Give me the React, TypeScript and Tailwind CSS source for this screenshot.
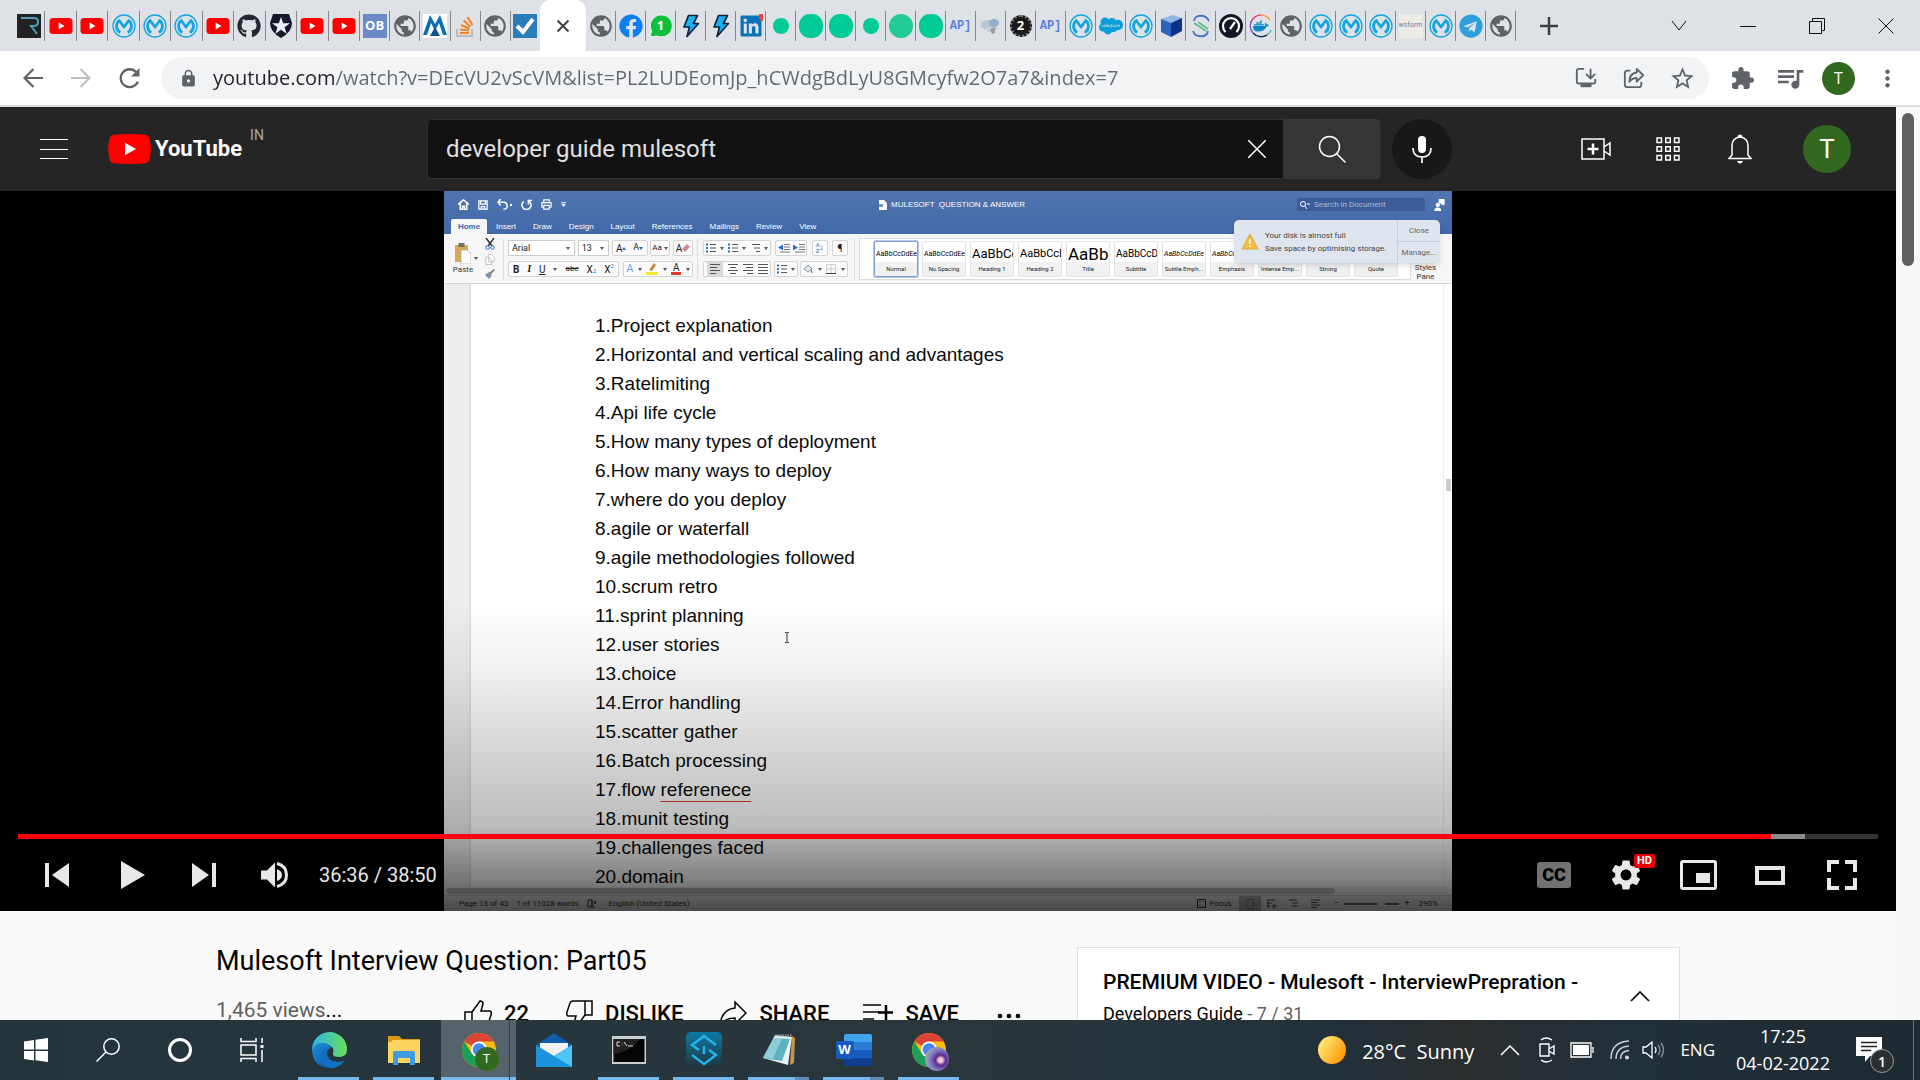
import React from "react";
import type { ReactNode } from "react";
import { MdPublic, MdExtension, MdLock, MdStarBorder, MdQueueMusic, MdMoreVert, MdSettings } from "react-icons/md";
import { FaGithub, FaFacebook, FaLinkedin, FaSalesforce, FaTelegram, FaDocker } from "react-icons/fa";

/* ---------- Favicons ---------- */

const YtFav = () => (
  <svg viewBox="0 0 24 24" className="size-6">
    <rect x="0.5" y="4" width="23" height="16" rx="3.5" fill="#f00" />
    <path d="M9.7 8.6v6.8l5.8-3.4z" fill="#fff" />
  </svg>
);
const MuleFav = () => (
  <svg viewBox="0 0 24 24" className="size-6" fill="none" stroke="#12a5e0">
    <circle cx="12" cy="12" r="11" strokeWidth="1.3" />
    <path d="M8.200 18.600A7.500 7.500 0 0 1 7.200 6.500l4.800 6.500 4.800-6.500a7.500 7.500 0 0 1-1 12.100" strokeWidth="2.800" strokeLinejoin="round" />
  </svg>
);
const GlobeFav = () => <MdPublic className="size-[26px] shrink-0 text-[#5f6368]" />;
const RFav = () => (
  <svg viewBox="0 0 24 24" className="size-6">
    <rect width="24" height="24" fill="#222" />
    <path d="M4 4h13q4 0 4 4t-4 4h-3l6 8" fill="none" stroke="#4f9db8" strokeWidth="2" />
  </svg>
);
const ShieldFav = () => (
  <svg viewBox="0 0 24 24" className="size-6">
    <path d="M4 0h16l3 9q0 9-11 15Q1 18 1 9z" fill="#16192a" />
    <path d="m12 3 2.200 6.300H21l-5.400 4 2 6.500-5.600-4-5.600 4 2-6.500-5.400-4h6.800z" fill="#eef" />
  </svg>
);
const ObFav = () => <span className="flex size-6 shrink-0 items-center justify-center bg-[#6a8ac8] font-['Open_Sans',sans-serif] text-[13px] font-bold text-white">OB</span>;
const PeaksFav = () => (
  <svg viewBox="0 0 24 24" className="size-6">
    <rect width="24" height="24" fill="#fff" />
    <path d="M0 21 7 1l5 9 5-9 7 20h-4L16 9l-4 8-4-8-4 12z" fill="#0b6fb8" />
    <path d="m12 13 5 9H7z" fill="#0a4f93" />
  </svg>
);
const StackFav = () => (
  <svg viewBox="0 0 24 24" className="size-6" fill="none" strokeWidth="2">
    <path d="M4 15v7h15v-7" stroke="#bcbbbb" />
    <path d="M7 19h9M7 15.500l9 1M8 11l8.500 3.500M10.500 6.500l7 6M14.500 3l5 8" stroke="#f48024" />
  </svg>
);
const CheckFav = () => (
  <svg viewBox="0 0 24 24" className="size-6">
    <rect width="24" height="24" fill="#2a7db8" />
    <path d="m4 12 6 6L20 5" fill="none" stroke="#fff" strokeWidth="4" />
  </svg>
);
const WaFav = () => (
  <span className="relative flex size-6 items-center justify-center">
    <svg viewBox="0 0 24 24" className="absolute inset-0 size-6">
      <path d="M1 23 2.600 17A11 11 0 1 1 8 22z" fill="#0fbf3c" stroke="#e9f7ec" />
    </svg>
    <b className="relative font-['Open_Sans',sans-serif] text-[13px] leading-none text-white">1</b>
  </span>
);
const BoltFav = () => (
  <svg viewBox="0 0 24 24" className="size-6">
    <path d="M9.500 1.500h9l-4 8h5L8 22.500l2.500-9.500H5z" fill="#1cb0f6" stroke="#10243f" strokeWidth="1.700" strokeLinejoin="round" />
  </svg>
);
const LinkedFav = () => (
  <span className="relative size-6">
    <FaLinkedin className="size-6 text-[#0a73b5]" />
    <i className="absolute right-0 top-0 h-[7px] w-1 rounded-bl-full bg-[#e8453c]" />
  </span>
);
const ApiFav = () => <span className="font-['Liberation_Mono',monospace] text-[12px] font-bold text-[#5b7fe0]">AP]</span>;
const CloudFav = () => (
  <svg viewBox="0 0 24 24" className="size-6">
    <ellipse cx="10" cy="11" rx="8" ry="5" fill="#b9c4d0" />
    <ellipse cx="15" cy="9" rx="5" ry="4" fill="#8fb1cf" />
    <path d="M6 13h13l-3 5H9z" fill="#cdd2d8" />
    <path d="m11 15 5-2v6l-3 1z" fill="#9a9da2" />
  </svg>
);
const TwoFav = () => <span className="flex size-[22px] items-center justify-center rounded-full border-2 border-dotted border-[#777] bg-[#191919] font-['Open_Sans',sans-serif] text-[13px] font-bold text-white">2</span>;
const CubeFav = () => (
  <svg viewBox="0 0 24 24" className="size-6">
    <path d="m2 5 12-4 9 3-11 5z" fill="#8fb5e6" />
    <path d="M2 5l10 4v14L2 18z" fill="#2d62bd" />
    <path d="m12 9 11-5v13l-11 6z" fill="#0d3187" />
  </svg>
);
const SFav = () => (
  <svg viewBox="0 0 24 24" className="size-6" fill="none" strokeWidth="1.800">
    <path d="M20 7C17 0 6 0 5 7M4 17c2 7 14 7 15 0" stroke="#4a76c9" />
    <path d="m5 9 12 8M9 8l10 7" stroke="#5bbf8d" />
  </svg>
);
const GaugeFav = () => (
  <svg viewBox="0 0 24 24" className="size-6" fill="none">
    <circle cx="12" cy="12" r="12" fill="#141526" />
    <path d="M6.500 18A8 8 0 1 1 17.500 18" stroke="#fff" strokeWidth="2.200" />
    <path d="m11 15 5-7" stroke="#fff" strokeWidth="2.200" />
  </svg>
);
const DockerFav = () => (
  <span className="relative flex size-6 items-center justify-center">
    <svg viewBox="0 0 24 24" className="absolute inset-0 size-6" fill="none" strokeWidth="1.500">
      <path d="M12 1A11 11 0 0 1 21 6" stroke="#f9a13a" />
      <path d="M12 1A11 11 0 0 0 3 6" stroke="#ec3f6c" />
      <path d="M3 6a11 11 0 0 0 1 13" stroke="#7a4fc7" />
      <path d="M4 19a11 11 0 0 0 14 2" stroke="#1a3657" />
      <path d="M18 21a11 11 0 0 0 4-5" stroke="#3ec9c0" />
    </svg>
    <FaDocker className="size-4 text-[#0a87c9]" />
  </span>
);
const WsFav = () => <span className="flex size-6 items-center justify-center bg-[#edebe6] font-['Roboto',sans-serif] text-[7px] text-[#5b86b5]">wsform</span>;
const DotFav = () => <i className="size-4 rounded-full bg-[#00cb96]" />;
const BigFav = () => <i className="size-6 rounded-[11px] bg-[#00cb96]" />;
const BigLightFav = () => <i className="size-6 rounded-full bg-[#22cb98]" />;

const leftTabs: [string, ReactNode][] = [
  ["R", <RFav />], ["YouTube", <YtFav />], ["YouTube", <YtFav />], ["MuleSoft", <MuleFav />], ["MuleSoft", <MuleFav />], ["MuleSoft", <MuleFav />],
  ["YouTube", <YtFav />], ["GitHub", <FaGithub className="size-6 text-[#24292f]" />], ["Auth0", <ShieldFav />], ["YouTube", <YtFav />], ["YouTube", <YtFav />],
];
const midTabs: [string, ReactNode][] = [
  ["OB", <ObFav />], ["Page", <GlobeFav />], ["Peaks", <PeaksFav />], ["Stack Overflow", <StackFav />], ["Page", <GlobeFav />], ["Tasks", <CheckFav />],
];
const rightTabs: [string, ReactNode][] = [
  ["Page", <GlobeFav />], ["Facebook", <FaFacebook className="size-6 text-[#0d7ff2]" />], ["WhatsApp", <WaFav />], ["Bolt", <BoltFav />], ["Bolt", <BoltFav />],
  ["LinkedIn", <LinkedFav />], ["Course", <DotFav />], ["Course", <BigFav />], ["Course", <BigFav />], ["Course", <DotFav />], ["Course", <BigLightFav />], ["Course", <BigFav />],
  ["API", <ApiFav />], ["Cloud", <CloudFav />], ["Two", <TwoFav />], ["API", <ApiFav />], ["MuleSoft", <MuleFav />],
  ["Salesforce", <FaSalesforce className="size-6 text-[#0a9ddb]" />], ["MuleSoft", <MuleFav />], ["Cube", <CubeFav />], ["S", <SFav />], ["Gauge", <GaugeFav />],
  ["Docker", <DockerFav />], ["Page", <GlobeFav />], ["MuleSoft", <MuleFav />], ["MuleSoft", <MuleFav />], ["MuleSoft", <MuleFav />], ["Form", <WsFav />],
  ["MuleSoft", <MuleFav />], ["Telegram", <FaTelegram className="size-6 text-[#2d9fdc]" />], ["Page", <GlobeFav />],
];

function Tab({ label, last, children }: { label: string; last?: boolean; children: ReactNode }) {
  return (
    <button aria-label={label} className={`flex h-[30px] min-w-0 flex-1 items-center justify-center ${last ? "" : "border-r border-[#85888c]"}`}>
      {children}
    </button>
  );
}

const toolBtn = "flex size-8 shrink-0 items-center justify-center text-[#5f6368]";

function BrowserChrome() {
  return (
    <header className="shrink-0 font-['Open_Sans',sans-serif]">
      <div className="flex h-[51px] items-center bg-[#dee1e6] pl-[14px]">
        <div className="flex w-[346px] shrink-0">{leftTabs.map(([l, n], i) => <Tab key={i} label={l}>{n}</Tab>)}</div>
        <div className="flex w-[180px] shrink-0">{midTabs.map(([l, n], i) => <Tab key={i} label={l} last={i === 5}>{n}</Tab>)}</div>
        <div className="flex h-full w-[46px] shrink-0 items-center justify-center rounded-t-[10px] bg-white">
          <button aria-label="Close tab">
            <svg viewBox="0 0 14 14" className="size-[14px]" stroke="#3c4043" strokeWidth="2"><path d="m1.500 1.500 11 11m0-11-11 11" /></svg>
          </button>
        </div>
        <div className="flex w-[930px] shrink-0">{rightTabs.map(([l, n], i) => <Tab key={i} label={l}>{n}</Tab>)}</div>
        <button aria-label="New tab" className="flex w-[66px] justify-center">
          <svg viewBox="0 0 18 18" className="size-[18px]" stroke="#3c4043" strokeWidth="2.500"><path d="M9 0v18M0 9h18" /></svg>
        </button>
        <div className="ml-auto flex h-11 items-center">
          <button aria-label="Search tabs" className="flex w-[69px] justify-center"><svg viewBox="0 0 16 16" className="size-4" fill="none" stroke="#111"><path d="m1 3 7 9 7-9" /></svg></button>
          <button aria-label="Minimize" className="flex w-[69px] justify-center"><svg viewBox="0 0 16 16" className="size-4" stroke="#111"><path d="M0 8.500h16" /></svg></button>
          <button aria-label="Restore" className="flex w-[69px] justify-center"><svg viewBox="0 0 16 16" className="size-4" fill="none" stroke="#111"><path d="M.5 3.500h12v12H.5zM3.500 3.500v-3h12v12h-3" /></svg></button>
          <button aria-label="Close" className="flex w-[69px] justify-center"><svg viewBox="0 0 16 16" className="size-4" stroke="#111"><path d="m.5.5 15 15m0-15-15 15" /></svg></button>
        </div>
      </div>
      <div className="flex h-14 items-center border-b-2 border-[#dcdcdc] bg-white px-[17px]">
        <button aria-label="Back" className={toolBtn}><svg viewBox="0 0 20 20" className="size-5" fill="none" stroke="#5f6368" strokeWidth="2.200"><path d="M20 10H2M10.500 1 1.500 10l9 9" /></svg></button>
        <button aria-label="Forward" className={`${toolBtn} ml-4`}><svg viewBox="0 0 20 20" className="size-5" fill="none" stroke="#bdc1c6" strokeWidth="2.200"><path d="M0 10h18M9.500 1l9 9-9 9" /></svg></button>
        <button aria-label="Reload" className={`${toolBtn} mx-4`}><svg viewBox="0 0 20 20" className="size-[21px]" fill="none"><path d="M18 13a8.500 8.500 0 1 1-1.500-9" stroke="#5f6368" strokeWidth="2.200" /><path d="M19.500 0v8h-8z" fill="#5f6368" /></svg></button>
        <div className="flex h-[42px] min-w-0 flex-1 items-center rounded-full bg-[#f1f3f4] pl-[18px] pr-[11px]">
          <MdLock className="size-[19px] shrink-0 text-[#5f6368]" />
          <input
            aria-label="Address"
            defaultValue="youtube.com/watch?v=DEcVU2vScVM&list=PL2LUDEomJp_hCWdgBdLyU8GMcyfw2O7a7&index=7"
            className="ml-[15px] min-w-0 flex-1 bg-[linear-gradient(90deg,#202124_121px,#64676b_121px)] bg-clip-text text-[20px] text-transparent outline-none"
          />
          <button aria-label="Install" className={`${toolBtn} mr-4`}><svg viewBox="0 0 24 24" className="size-[22px]" fill="none" stroke="#5f6368" strokeWidth="2"><path d="M10 2H4q-2 0-2 2v12q0 2 2 2h16q2 0 2-2v-3M17 2v10m-5-4.500 5 5 5-5" /><path d="M6 18h12v4H6z" fill="#5f6368" stroke="none" /></svg></button>
          <button aria-label="Share page" className={`${toolBtn} mr-4`}><svg viewBox="0 0 24 24" className="size-[22px]" fill="none" stroke="#5f6368" strokeWidth="2" strokeLinejoin="round"><path d="M8 4H5Q2 4 2 7v12q0 3 3 3h12q3 0 3-3v-3" /><path d="M15 2l7 7-7 7v-4q-5 0-8 4 0-9 8-10z" /></svg></button>
          <button aria-label="Bookmark" className={toolBtn}><MdStarBorder className="size-[27px]" /></button>
        </div>
        <button aria-label="Extensions" className={`${toolBtn} ml-[17px]`}><MdExtension className="size-[25px]" /></button>
        <button aria-label="Media" className={`${toolBtn} ml-4`}><MdQueueMusic className="size-8" /></button>
        <button aria-label="Profile" className="ml-4 flex size-[33px] shrink-0 items-center justify-center rounded-full bg-[#33691e] text-[16px] text-white">T</button>
        <button aria-label="Menu" className={`${toolBtn} ml-4`}><MdMoreVert className="size-[27px]" /></button>
      </div>
    </header>
  );
}

/* ---------- YouTube masthead ---------- */

function Masthead() {
  return (
    <div className="flex h-[84px] items-center bg-[#252525] pl-10 pr-[45px] font-['Roboto',sans-serif] text-white">
      <button aria-label="Guide" className="flex h-5 w-7 flex-col justify-between"><i className="h-px w-full bg-white" /><i className="h-px w-full bg-white" /><i className="h-px w-full bg-white" /></button>
      <a href="#home" aria-label="YouTube home" className="ml-10 flex items-center">
        <svg viewBox="0 0 43 30" className="h-[30px] w-[43px]"><path d="M6 .8Q21.500-.8 37 .8q4 .5 4.800 4.700 2 9.500 0 19-.8 4.200-4.800 4.700-15.500 1.600-31 0-4-.5-4.800-4.700-2-9.500 0-19Q2 1.300 6 .8z" fill="#f00" /><path d="M17 8.700v12.600L28 15z" fill="#fff" /></svg>
        <span className="ml-1 text-[22px] font-bold leading-[30px]">YouTube</span>
        <span className="mb-7 ml-2 text-[14px] leading-none text-[#aaa]">IN</span>
      </a>
      <form className="ml-auto flex h-[60px] w-[953px] shrink-0" onSubmit={(e) => e.preventDefault()}>
        <div className="flex min-w-0 flex-1 items-center rounded-l-sm border border-[#303030] bg-[#121212] pl-[18px] pr-[17px]">
          <input aria-label="Search" defaultValue="developer guide mulesoft" className="min-w-0 flex-1 bg-transparent text-[24px] text-[#e0e0e0] outline-none" />
          <button type="button" aria-label="Clear"><svg viewBox="0 0 18 18" className="size-[18px]" stroke="#fff" strokeWidth="1.500"><path d="m0 0 18 18m0-18L0 18" /></svg></button>
        </div>
        <button aria-label="Search" className="flex w-24 items-center justify-center rounded-r-sm border border-[#3a3a3a] bg-[#353535]">
          <svg viewBox="0 0 28 28" className="size-7" fill="none" stroke="#fff" strokeWidth="1.500"><circle cx="11.500" cy="11.500" r="10" /><path d="m18.500 18.500 9 9" /></svg>
        </button>
      </form>
      <button aria-label="Search with voice" className="ml-3 flex size-[60px] shrink-0 items-center justify-center rounded-full bg-[#181818]">
        <svg viewBox="0 0 20 28" className="h-7 w-5" fill="none" stroke="#fff" strokeWidth="1.700"><rect x="6" y="1" width="8" height="17" rx="4" fill="#fff" stroke="none" /><path d="M1 13q0 9 9 9t9-9M10 22v6" /></svg>
      </button>
      <button aria-label="Create" className="ml-[129px]"><svg viewBox="0 0 30 22" className="h-[22px] w-[30px]" fill="none" stroke="#fff" strokeWidth="1.500"><path d="M1 1h22v20H1zM23 9l6-4v12l-6-4" /><path d="M12 5.500v11M6.500 11h11" strokeWidth="2.500" /></svg></button>
      <button aria-label="Apps" className="ml-[45px]"><svg viewBox="0 0 24 24" className="size-6" fill="none" stroke="#fff" strokeWidth="1.500">{[1, 9.750, 18.500].map((y) => [1, 9.750, 18.500].map((x) => <rect key={`${x}-${y}`} x={x} y={y} width="4.500" height="4.500" />))}</svg></button>
      <button aria-label="Notifications" className="ml-12"><svg viewBox="0 0 24 30" className="h-[30px] w-6" fill="none" stroke="#fff" strokeWidth="1.500"><path d="M1 24.500 4 21v-9q0-8 8-9 8 1 8 9v9l3 3.500z" /><path d="M9.500 3q0-2.500 2.500-2.500T14.500 3zM9 27h6q-1 2.500-3 2.500T9 27z" fill="#fff" stroke="none" /></svg></button>
      <button aria-label="Account" className="ml-[51px] flex size-12 shrink-0 items-center justify-center rounded-full bg-[#33691e] text-[26px]">T</button>
    </div>
  );
}

/* ---------- Word document shown in the video ---------- */

const group = "flex h-4 items-center justify-around rounded-[2px] border border-[#d4d4d4] bg-[#fbfbfb] text-[10px] text-[#222]";
const Caret = () => <svg viewBox="0 0 4 3" className="h-[3px] w-1 shrink-0" fill="#555"><path d="M0 0h4L2 3z" /></svg>;
const Lines = ({ d, bullet }: { d: string; bullet?: boolean }) => (
  <svg viewBox="0 0 10 10" className="size-[10px]" fill="none" stroke="#555"><path d={d} />{bullet && <path d="M0 1.500h2M0 5h2M0 8.500h2" stroke="#2b6fc9" strokeWidth="2" />}</svg>
);
const Indent = ({ out }: { out?: boolean }) => (
  <svg viewBox="0 0 12 10" className="h-[10px] w-3" fill="none" stroke="#777"><path d="M6 1.500h6M6 4h6M6 6.500h6M2 9h10" /><path d={out ? "M5 1.500v6L0 4.500z" : "M0 1.500v6l5-3z"} fill="#2b6fc9" stroke="none" /></svg>
);
const LIST = "M4 1.500h6M4 5h6M4 8.500h6";

function B({ label, children, className = "" }: { label: string; children: ReactNode; className?: string }) {
  return <button aria-label={label} className={`flex h-full items-center justify-center ${className}`}>{children}</button>;
}

const wordTabs = ["Home", "Insert", "Draw", "Design", "Layout", "References", "Mailings", "Review", "View"];
const wordStyles: [string, string, string][] = [
  ["Normal", "AaBbCcDdEe", "text-[7px]"],
  ["No Spacing", "AaBbCcDdEe", "text-[7px]"],
  ["Heading 1", "AaBbCc", "text-[13px]"],
  ["Heading 2", "AaBbCcD", "text-[11px]"],
  ["Title", "AaBbC", "text-[17px]"],
  ["Subtitle", "AaBbCcD", "text-[10px] text-[#777]"],
  ["Subtle Emph...", "AaBbCcDdEe", "text-[7px] italic text-[#666]"],
  ["Emphasis", "AaBbCcDdEe", "text-[7px] italic"],
  ["Intense Emp...", "AaBbCcDdEe", "text-[7px] italic text-[#4472c4]"],
  ["Strong", "AaBbCcDdEe", "text-[7px] font-bold"],
  ["Quote", "AaBbCcDdEe", "text-[7px] italic"],
];
const docLines = [
  "1.Project explanation", "2.Horizontal and vertical scaling and advantages", "3.Ratelimiting", "4.Api life cycle", "5.How many types of deployment",
  "6.How many ways to deploy", "7.where do you deploy", "8.agile or waterfall", "9.agile methodologies followed", "10.scrum retro", "11.sprint planning",
  "12.user stories", "13.choice", "14.Error handling", "15.scatter gather", "16.Batch processing", "17.flow ", "18.munit testing", "19.challenges faced", "20.domain",
];

function WordRibbon() {
  return (
    <div className="flex h-[50px] items-center border-b border-[#d5d5d5] bg-[#f6f6f6] pl-2 font-['Roboto',sans-serif]">
      <div className="flex w-[22px] flex-col items-center">
        <svg viewBox="0 0 16 22" className="h-[22px] w-4"><path d="M0 3h13v17H0z" fill="#dba753" /><path d="M3.500 1h6v4h-6z" fill="#6d6d6d" /><path d="M6 8h6l4 4v10H6z" fill="#fff" stroke="#aaa" strokeWidth=".7" /></svg>
        <span className="text-[8px] leading-3 text-[#333]">Paste</span>
      </div>
      <Caret />
      <div className="ml-[6px] flex w-3 flex-col items-center gap-1">
        <svg viewBox="0 0 10 12" className="h-3 w-[10px]" fill="none"><path d="m1 0 6 8M9 0 3 8" stroke="#333" strokeWidth="1.500" /><circle cx="2.500" cy="9.500" r="1.800" stroke="#2b6fc9" /><circle cx="7.500" cy="9.500" r="1.800" stroke="#2b6fc9" /></svg>
        <svg viewBox="0 0 10 12" className="h-[11px] w-[10px]" fill="#fff" stroke="#bbb"><path d="M3.500.5h3l3 3v5h-6zM.5 3.500h3l3 3v5h-6z" /></svg>
        <svg viewBox="0 0 10 10" className="size-[10px]"><path d="m9 0 1 1-4 4-2-1z" fill="#777" /><path d="m4 3 3 3-3 4-4-4z" fill="#7d93ad" /></svg>
      </div>
      <i className="ml-[7px] h-10 w-px bg-[#ddd]" />
      <div className="ml-1 flex w-[185px] flex-col gap-[5px]">
        <div className="flex justify-between">
          <label className="flex h-4 w-[67px] items-center border border-[#ccc] bg-white pr-1"><select aria-label="Font" className="w-full appearance-none pl-[3px] text-[9px] leading-none text-[#222]"><option>Arial</option></select><Caret /></label>
          <label className="flex h-4 w-[31px] items-center border border-[#ccc] bg-white pr-1"><select aria-label="Font size" className="w-full appearance-none pl-[3px] text-[9px] leading-none text-[#222]"><option>13</option></select><Caret /></label>
          <div className={`${group} w-9`}><B label="Grow font">A<svg viewBox="0 0 4 3" className="h-[3px] w-1" fill="#2b6fc9"><path d="M0 3h4L2 0z" /></svg></B><B label="Shrink font" className="text-[9px]">A<svg viewBox="0 0 4 3" className="h-[3px] w-1" fill="#2b6fc9"><path d="M0 0h4L2 3z" /></svg></B></div>
          <div className={`${group} w-5`}><B label="Change case" className="text-[8px]">Aa</B><Caret /></div>
          <div className={`${group} w-5`}><B label="Clear formatting">A<svg viewBox="0 0 8 8" className="size-2"><path d="m5 0 3 3-5 5-3-3z" fill="#d88a96" /></svg></B></div>
        </div>
        <div className="flex gap-1">
          <div className={`${group} w-[111px]`}>
            <B label="Bold" className="font-bold">B</B><B label="Italic" className="font-serif font-bold italic">I</B><B label="Underline" className="underline">U</B><Caret /><B label="Strikethrough" className="text-[8px] line-through">abc</B><B label="Subscript">X<sub className="text-[6px] text-[#2b6fc9]">2</sub></B><B label="Superscript">X<sup className="text-[6px] text-[#2b6fc9]">2</sup></B>
          </div>
          <div className={`${group} w-[70px]`}>
            <B label="Text effects" className="text-[11px] text-[#6aa5e8]">A</B><Caret />
            <B label="Highlight"><svg viewBox="0 0 12 12" className="size-3"><path d="m8 0 2 2-4 6-3-1z" fill="#c08c3a" /><path d="M0 9h12v3H0z" fill="#f7e733" /></svg></B><Caret />
            <B label="Font color"><span className="border-b-[3px] border-[#e23b2e] px-[2px] leading-[9px]">A</span></B><Caret />
          </div>
        </div>
      </div>
      <i className="ml-1 h-10 w-px bg-[#ddd]" />
      <div className="ml-[5px] flex w-[145px] flex-col gap-[5px]">
        <div className="flex justify-between">
          <div className={`${group} w-[68px]`}><B label="Bullets"><Lines d={LIST} bullet /></B><Caret /><B label="Numbering"><Lines d={LIST} bullet /></B><Caret /><B label="Multilevel"><Lines d="M2 1.500h8M4 5h6M6 8.500h4" /></B><Caret /></div>
          <div className={`${group} w-8`}><B label="Decrease indent"><Indent out /></B><B label="Increase indent"><Indent /></B></div>
          <div className={`${group} w-4`}><B label="Sort" className="text-[8px]"><span className="text-[6px] leading-[6px] text-[#2b6fc9]">A<br />Z</span>↓</B></div>
          <div className={`${group} w-4`}><B label="Show marks">¶</B></div>
        </div>
        <div className="flex justify-between">
          <div className={`${group} w-[68px]`}><B label="Align left" className="w-4 bg-[#d8d8d8]"><Lines d="M0 .5h10M0 3.500h7M0 6.500h10M0 9.500h6" /></B><B label="Center"><Lines d="M0 .5h10M2 3.500h6M0 6.500h10M2 9.500h6" /></B><B label="Align right"><Lines d="M0 .5h10M3 3.500h7M0 6.500h10M4 9.500h6" /></B><B label="Justify"><Lines d="M0 .5h10M0 3.500h10M0 6.500h10M0 9.500h10" /></B></div>
          <div className={`${group} w-6`}><B label="Line spacing"><Lines d={LIST} bullet /></B><Caret /></div>
          <div className={`${group} w-12`}><B label="Shading"><svg viewBox="0 0 10 10" className="size-[10px]"><path d="m1 5 4-4 4 4-4 3z" fill="#dfe7ef" stroke="#667" strokeWidth=".7" /><path d="M8 5q2 3 1 4T8 5z" fill="#2b6fc9" /></svg></B><Caret /><B label="Borders"><svg viewBox="0 0 10 10" className="size-[10px]" fill="none" stroke="#ccc"><path d="M.5.5h9v9h-9zM5 0v10M0 5h10" /><path d="M0 9.500h10" stroke="#444" /></svg></B><Caret /></div>
        </div>
      </div>
      <i className="ml-[6px] h-10 w-px bg-[#ddd]" />
      <div className="ml-1 flex h-[42px] min-w-0 flex-1 items-center border border-[#ddd] bg-white pl-[14px]">
        {wordStyles.map(([name, sample, cls], i) => (
          <button key={name} className={`mr-1 flex h-[36px] w-11 shrink-0 flex-col overflow-hidden rounded-[2px] border bg-white ${i === 0 ? "border-[#7f9fd0] ring-1 ring-[#b5c9e8]" : "border-[#e4e4e4]"}`}>
            <span className={`h-[22px] w-full overflow-hidden whitespace-nowrap pl-px text-left leading-[24px] text-black ${cls}`}>{sample}</span>
            <span className="h-[14px] w-full whitespace-nowrap bg-[#f1f1f1] text-center text-[6px] leading-[13px] text-[#222]">{name}</span>
          </button>
        ))}
      </div>
      <button className="flex h-full w-[41px] items-end justify-center pb-[2px] pr-3 text-[8px] leading-[9px] text-[#333]">Styles<br />Pane</button>
    </div>
  );
}

function WordWindow() {
  return (
    <div className="relative flex h-full w-[1008px] flex-col bg-white font-['Roboto',sans-serif]">
      <div className="flex h-[43px] flex-col justify-between bg-gradient-to-b from-[#5075b0] to-[#4168a8] text-white">
        <div className="flex h-[27px] items-center pl-[14px] pr-[7px]">
          <div className="flex w-[421px] items-center gap-[9px]">
            <button aria-label="Home"><svg viewBox="0 0 12 12" className="size-[11px]" fill="none" stroke="#fff" strokeWidth="1.700"><path d="m0 6 6-5 6 5M2.500 5v6.500h2.500V8h2v3.500h2.500V5" /></svg></button>
            <button aria-label="Save"><svg viewBox="0 0 12 12" className="size-[10px]" fill="none" stroke="#fff" strokeWidth="1.500"><path d="M1 1h10v10H1zM3 1v4h6V1M4 11V8h4v3" /></svg></button>
            <button aria-label="Undo" className="flex items-center gap-[2px]"><svg viewBox="0 0 12 12" className="size-[11px]" fill="none" stroke="#fff" strokeWidth="1.600"><path d="M4 0 1 3.500 4 7M1 3.500h6q4 0 4 4T7 11" /></svg><i className="h-[2px] w-[2px] bg-white" /></button>
            <button aria-label="Redo"><svg viewBox="0 0 12 12" className="size-[11px]" fill="none" stroke="#fff" strokeWidth="1.600"><path d="M3 2.500a5 5 0 1 0 6 0M8 6V1.500h4" /></svg></button>
            <button aria-label="Print"><svg viewBox="0 0 12 12" className="size-[11px]" fill="none" stroke="#fff" strokeWidth="1.300"><path d="M3 4V1h6v3M3 9H1V4h10v5H9M3 7h6v4H3z" /></svg></button>
            <button aria-label="Customize"><svg viewBox="0 0 6 6" className="size-[5px]" fill="#fff"><path d="M0 0h6v1H0zM0 2h6L3 6z" /></svg></button>
          </div>
          <div className="flex items-center gap-1 whitespace-pre font-['Liberation_Sans',sans-serif] text-[8px]">
            <svg viewBox="0 0 8 10" className="h-[10px] w-2"><path d="M0 0h5l3 3v7H0z" fill="#fff" /><path d="M0 4h4v3H0z" fill="#7a9bd0" /></svg>
            MULESOFT  QUESTION &amp; ANSWER
          </div>
          <label className="ml-auto flex h-[13px] w-32 items-center gap-1 rounded-[2px] bg-[#3b5c96] px-[3px]">
            <svg viewBox="0 0 10 8" className="h-2 w-[10px]" fill="none" stroke="#fff"><circle cx="3" cy="3" r="2.500" /><path d="m5 5 2 3M7 3h3" /></svg>
            <input aria-label="Search in Document" placeholder="Search in Document" className="min-w-0 flex-1 bg-transparent text-[8px] leading-none outline-none placeholder:text-[#a9bbdb]" />
          </label>
          <svg viewBox="0 0 12 14" className="ml-[9px] h-3 w-[11px]" fill="#fff"><path d="M5 0h7v7H9L7 5H5z" /><circle cx="4" cy="7" r="2.500" /><path d="M0 14q0-4 4-4t4 4z" /></svg>
        </div>
        <nav className="flex h-[15px] items-stretch pl-[7px] font-['Liberation_Sans',sans-serif] text-[8px]">
          {wordTabs.map((t, i) => (
            <button key={t} className={i === 0 ? "w-9 rounded-t-[2px] bg-[#f6f6f6] font-bold text-[#3f66a6]" : "ml-px px-2"}>{t}</button>
          ))}
        </nav>
      </div>
      <WordRibbon />
      <div className="flex min-h-0 flex-1">
        <div className="w-[27px] border-r-2 border-[#e0e0e0] bg-[#ededed]" />
        <ol className="flex-1 overflow-hidden pl-[124px] pt-[27px] font-['Liberation_Sans',sans-serif] text-[19px] leading-[29px] text-[#0a0a0a]">
          {docLines.map((l, i) => (
            <li key={l}>{l}{i === 16 && <span className="underline decoration-[#d33a2a] decoration-1 underline-offset-[5px]">referenece</span>}</li>
          ))}
        </ol>
        <div className="flex w-[9px] items-start border-l border-[#eee] pl-[2px]"><i className="mt-[195px] h-3 w-[5px] bg-[#ccc]" /></div>
      </div>
      <div className="h-2 bg-[#f0f0f0] pt-px"><i className="ml-[2px] block h-[6px] w-[889px] rounded-full bg-[#bbb]" /></div>
      <div className="flex h-4 items-center border-t border-[#c8c8c8] bg-[#e2e2e2] pl-[15px] pr-[14px] text-[8px] text-[#333]">
        <span>Page 13 of 43</span>
        <span className="ml-2">1 of 11028 words</span>
        <svg viewBox="0 0 10 9" className="ml-2 h-[9px] w-[10px]" fill="none" stroke="#333"><path d="M1 1h4v7H1zM5 1v7h3M7 2l2 3m0-3L7 5" /></svg>
        <span className="ml-3">English (United States)</span>
        <button className="ml-auto flex items-center gap-1"><svg viewBox="0 0 9 9" className="size-[9px]" fill="none" stroke="#333"><path d="M.5.5h8v8h-8zM2.500 2.500h1m2 0h1m-4 4h1m2 0h1" /></svg>Focus</button>
        <button aria-label="Print layout" className="ml-2 flex h-full w-[22px] items-center justify-center bg-[#aaa]"><i className="h-[10px] w-2 border border-[#777]" /></button>
        <button aria-label="Web layout" className="ml-[6px]"><Lines d="M0 1h8M0 4h5M0 7h4M1 1v8M7 5v5M5 7h5" /></button>
        <button aria-label="Outline" className="ml-3"><Lines d="M0 1h8M3 4h6M3 7h6" /></button>
        <button aria-label="Draft" className="ml-3"><Lines d="M0 1h9M0 3.500h7M0 6h9M0 8.500h6" /></button>
        <button aria-label="Zoom out" className="ml-3 text-[9px]">−</button>
        <input aria-label="Zoom" type="range" defaultValue={72} className="ml-[5px] h-[2px] w-[55px] appearance-none bg-[#666] [&::-webkit-slider-thumb]:size-2 [&::-webkit-slider-thumb]:appearance-none [&::-webkit-slider-thumb]:rounded-full [&::-webkit-slider-thumb]:bg-[#ddd]" />
        <button aria-label="Zoom in" className="ml-[6px] text-[9px]">+</button>
        <span className="ml-[9px]">290%</span>
      </div>

      {/* Disk notification floats above the ribbon */}
      <div className="absolute right-[12px] top-[29px] flex h-[43px] w-[206px] rounded-[5px] bg-[#dfe5ef] text-[#444] shadow-md">
        <div className="flex flex-1 items-center gap-[6px] pl-[7px]">
          <svg viewBox="0 0 18 18" className="size-[18px] shrink-0"><path d="m9 1 8 15H1z" fill="#f2bd42" stroke="#e3ad36" strokeLinejoin="round" /><path d="M9 6v5m0 1.500V14" stroke="#fff" strokeWidth="1.500" /></svg>
          <div className="whitespace-nowrap text-[8px] leading-[13px]"><p>Your disk is almost full</p><p>Save space by optimising storage.</p></div>
        </div>
        <div className="flex w-[43px] flex-col border-l border-[#c9cfda] text-[8px] text-[#666]">
          <button className="flex-1 border-b border-[#c9cfda]">Close</button>
          <button className="flex-1">Manage...</button>
        </div>
      </div>
      {/* Text cursor over the page */}
      <svg viewBox="0 0 6 11" className="absolute left-[340px] top-[441px] h-[11px] w-[6px]" fill="none" stroke="#333"><path d="M1 .5h1.500l.5.500.5-.500H5M3 1v9M1 10.500h1.500l.5-.500.5.500H5" /></svg>
    </div>
  );
}

/* ---------- Player ---------- */

function Player() {
  return (
    <section aria-label="Video player" className="relative flex h-[720px] justify-center bg-black font-['Roboto',sans-serif]">
      <WordWindow />
      <div className="absolute inset-x-0 bottom-0 flex h-[310px] flex-col justify-end bg-[linear-gradient(to_bottom,transparent,rgba(0,0,0,0.05)_20%,rgba(0,0,0,0.26)_72%,rgba(0,0,0,0.5)_90%,rgba(0,0,0,0.68))] px-[18px] text-[#e8e8e8]">
        <input
          aria-label="Seek"
          type="range"
          defaultValue={94}
          className="block h-[5px] w-full appearance-none bg-[linear-gradient(90deg,#f00_94.25%,#8c8c8c_94.25%,#8c8c8c_96.1%,#333_96.1%)] [&::-webkit-slider-thumb]:size-0 [&::-webkit-slider-thumb]:appearance-none"
        />
        <div className="flex h-[72px] items-center pl-[27px] pr-[21px]">
          <button aria-label="Previous"><svg viewBox="0 0 24 24" className="size-6" fill="#e8e8e8"><path d="M0 0h4v24H0zM24 0v24L7 12z" /></svg></button>
          <button aria-label="Play" className="ml-[52px]"><svg viewBox="0 0 24 28" className="h-7 w-6" fill="#e8e8e8"><path d="m0 0 24 14L0 28z" /></svg></button>
          <button aria-label="Next" className="ml-[47px]"><svg viewBox="0 0 24 24" className="size-6" fill="#e8e8e8"><path d="M20 0h4v24h-4zM0 0v24l17-12z" /></svg></button>
          <button aria-label="Mute" className="ml-[45px]"><svg viewBox="0 0 27 26" className="h-[26px] w-[27px]" fill="#e8e8e8"><path d="M0 8.500h6l8-8v25l-8-8H0zM16 7q5 2 5 6t-5 6z" /><path d="M16 1.500q9.500 2.500 9.500 11.500T16 24.500" fill="none" stroke="#e8e8e8" strokeWidth="3" /></svg></button>
          <span className="ml-[31px] text-[20px]">36:36 / 38:50</span>
          <button aria-label="Subtitles" className="ml-auto flex h-[26px] w-[34px] items-center justify-center rounded-[3px] bg-[#727272] text-[18px] font-black leading-none text-black">CC</button>
          <button aria-label="Settings" className="relative ml-[37px]">
            <MdSettings className="size-9" />
            <span className="absolute -right-[11px] -top-[3px] rounded-[2px] bg-[#e60000] px-[3px] text-[11px] font-bold leading-[14px] text-white">HD</span>
          </button>
          <button aria-label="Miniplayer" className="ml-9"><svg viewBox="0 0 37 30" className="h-[30px] w-[37px]"><rect x="1.500" y="1.500" width="34" height="27" rx="1.500" fill="none" stroke="#e8e8e8" strokeWidth="3" /><path d="M16 13h14v10H16z" fill="#e8e8e8" /></svg></button>
          <button aria-label="Theater mode" className="ml-[38px]"><svg viewBox="0 0 30 19" className="h-[19px] w-[30px]"><path d="M2 2h26v15H2z" fill="none" stroke="#e8e8e8" strokeWidth="4" /></svg></button>
          <button aria-label="Full screen" className="ml-[42px]"><svg viewBox="0 0 30 30" className="size-[30px]" fill="none" stroke="#e8e8e8" strokeWidth="4"><path d="M12 2H2v10M18 2h10v10M12 28H2V18M18 28h10V18" /></svg></button>
        </div>
      </div>
    </section>
  );
}

/* ---------- Below the player ---------- */

const action = "flex items-center gap-3 text-[22px] font-medium leading-7";

function Details() {
  return (
    <section className="flex flex-1 items-start justify-center overflow-hidden bg-[#f9f9f9] font-['Roboto',sans-serif] text-[#030303]">
      <div className="w-[861px] shrink-0 pt-8">
        <h1 className="text-[27px] leading-9">Mulesoft Interview Question: Part05</h1>
        <div className="mt-3 flex items-start">
          <span className="w-[248px] pt-[5px] text-[21px] leading-7 text-[#606060]">1,465 views<span className="text-[#030303]">...</span></span>
          <div className="flex items-center pt-[9px]">
            <button className={action}><svg viewBox="0 0 28 28" className="size-7" fill="none" stroke="#030303" strokeWidth="1.500"><path d="M1 12h7v14H1zM8 12l8-11q3 0 3 3l-2 7h9q2 1 1 4l-3 9q-1 2-3 2H8" /></svg>22</button>
            <button className={`${action} ml-9`}><svg viewBox="0 0 28 28" className="size-7" fill="none" stroke="#030303" strokeWidth="1.500"><path d="M27 15h-7V1h7zM20 15l-8 11q-3 0-3-3l2-7H3q-2-1-1-4L5 3q1-2 3-2h12" /></svg>DISLIKE</button>
            <button className={`${action} ml-9`}><svg viewBox="0 0 28 28" className="size-7" fill="none" stroke="#030303" strokeWidth="1.500"><path d="m16 2 11 11-11 11v-6Q6 18 1 25 3 9 16 8z" /></svg>SHARE</button>
            <button className={`${action} ml-[34px]`}><svg viewBox="0 0 30 28" className="h-7 w-[30px]" fill="none" stroke="#030303" strokeWidth="1.700"><path d="M0 5h18M0 12h18M0 19h11" /><path d="M23 5v15M15 12.500h15" strokeWidth="2.500" /></svg>SAVE</button>
            <button aria-label="More" className="ml-[38px] pt-1"><svg viewBox="0 0 24 6" className="h-[6px] w-6"><circle cx="3" cy="3" r="2.300" /><circle cx="12" cy="3" r="2.300" /><circle cx="21" cy="3" r="2.300" /></svg></button>
          </div>
        </div>
      </div>
      <aside className="mt-9 flex h-40 w-[603px] shrink-0 items-start justify-between border border-[#dfdfdf] bg-white pl-[25px] pr-[29px] pt-[19px]">
        <div>
          <h2 className="text-[21px] font-medium leading-[30px]">PREMIUM VIDEO - Mulesoft - InterviewPrepration -</h2>
          <p className="pt-[3px] text-[18px] leading-7">Developers Guide <span className="text-[#606060]">- 7 / 31</span></p>
        </div>
        <button aria-label="Collapse playlist" className="mt-6"><svg viewBox="0 0 20 11" className="h-[11px] w-5" fill="none" stroke="#030303" strokeWidth="1.700"><path d="m1 10 9-9 9 9" /></svg></button>
      </aside>
    </section>
  );
}

/* ---------- Taskbar ---------- */

const ChromeLogo = ({ children }: { children: ReactNode }) => (
  <span className="relative size-9">
    <svg viewBox="0 0 36 36" className="size-9">
      <circle cx="18" cy="18" r="17" fill="#f9bc15" />
      <path d="M18 18 3.300 9.500A17 17 0 0 1 32.700 9.500H18z" fill="#db4437" />
      <path d="M3.300 9.500A17 17 0 0 0 17 35l8-13-7-4-7 4z" fill="#1a9e58" />
      <circle cx="18" cy="17.500" r="8" fill="#fff" /><circle cx="18" cy="17.500" r="6.300" fill="#4688f1" />
    </svg>
    <span className="absolute -bottom-[3px] -right-[2px]">{children}</span>
  </span>
);
const EdgeIcon = () => (
  <svg viewBox="0 0 36 36" className="size-9">
    <defs><linearGradient id="edgeTop" x1="0" x2="1"><stop stopColor="#2cb1e8" /><stop offset="1" stopColor="#68e05b" /></linearGradient><linearGradient id="edgeLow" x1="0" x2="1" y1="0" y2="1"><stop stopColor="#1b8fd8" /><stop offset="1" stopColor="#0c4a9c" /></linearGradient></defs>
    <path d="M1 18A17.500 17.500 0 0 1 36 17q0 8-8 8-7 0-6-4 2-6-5-8-9-1-16 5z" fill="url(#edgeTop)" />
    <path d="M1 18q4-8 12-7 6 1 7 5-4 1-4 6 1 7 9 8 4 0 9-2-6 8-16 8Q2 35 1 18z" fill="url(#edgeLow)" />
    <path d="M10 24q0-7 7-9-3 5 0 10 5 7 16 4-6 8-14 7-9-3-9-12z" fill="#136fbf" />
  </svg>
);
const FolderIcon = () => (
  <svg viewBox="0 0 34 34" className="h-[34px] w-[34px]"><path d="M1 3h11l3 3h18v8H1z" fill="#d99a12" /><path d="M1 9h3l2-2h27v23H1z" fill="#fcd462" /><path d="M6 32V20q0-2 2-2h18q2 0 2 2v12h-5v-7H11v7z" fill="#3d9be0" /></svg>
);
const MailIcon = () => (
  <svg viewBox="0 0 36 34" className="h-[34px] w-9"><path d="M0 12 18 0l18 12v4H0z" fill="#0d5fae" /><path d="M4 10h28v14H4z" fill="#f1f1f1" /><path d="M0 12l18 11 18-11v22H0z" fill="#1d93e0" /><path d="M36 12v22L18 23z" fill="#4ec5f5" /></svg>
);
const CmdIcon = () => (
  <svg viewBox="0 0 34 28" className="h-7 w-[34px]"><path d="M0 0h34v28H0z" fill="#c9ced3" /><path d="M1.500 3h31v23h-31z" fill="#050505" /><path d="M1.500 26V18Q16 17 28 3H1.500z" fill="#222" /><path d="M8 6H5v4h3M10 7v.5m0 1.500v.5M12 6l3 4m1 0h5" stroke="#ddd" fill="none" /></svg>
);
const StudioIcon = () => (
  <svg viewBox="0 0 36 36" className="size-9"><defs><linearGradient id="studio" x2="0" y2="1"><stop stopColor="#0c7ba4" /><stop offset="1" stopColor="#22333a" /></linearGradient></defs><rect width="36" height="36" rx="5" fill="url(#studio)" /><path d="M30 13 18 4 6 13l7 5M6 23l12 9 12-9-7-5M18 14v8" fill="none" stroke="#20b5f0" strokeWidth="2.500" /></svg>
);
const NotepadIcon = () => (
  <svg viewBox="0 0 34 32" className="h-8 w-[34px]"><path d="M30 2l3 2-1 25-4 2z" fill="#c9934a" /><path d="m13 1 17 2-4 28L1 24z" fill="#e4f2f4" /><path d="m12 4 16 1-8 22L1 24z" fill="#5fb2bf" /><path d="m12 4 8 .5-9 20L1 24z" fill="#8cced6" /><path d="M13 1.500h17" stroke="#999" strokeWidth="2" strokeDasharray="1.500 1" /></svg>
);
const WordIcon = () => (
  <span className="relative h-8 w-9">
    <span className="ml-2 flex h-8 w-7 flex-col overflow-hidden rounded-[2px]"><i className="flex-1 bg-[#41a5ee]" /><i className="flex-1 bg-[#2b7cd3]" /><i className="flex-1 bg-[#185abd]" /><i className="flex-1 bg-[#103f91]" /></span>
    <b className="absolute left-0 top-[7px] flex size-[18px] items-center justify-center rounded-[2px] bg-[#185abd] text-[13px] text-white">W</b>
  </span>
);

const apps: { name: string; icon: ReactNode; open?: boolean; active?: boolean; stacked?: boolean }[] = [
  { name: "Edge", icon: <EdgeIcon />, open: true },
  { name: "File Explorer", icon: <FolderIcon />, open: true },
  { name: "Chrome", icon: <ChromeLogo><span className="flex size-6 items-center justify-center rounded-full bg-[#33691e] text-[13px] text-white">T</span></ChromeLogo>, open: true, active: true },
  { name: "Mail", icon: <MailIcon /> },
  { name: "Command Prompt", icon: <CmdIcon />, open: true },
  { name: "Anypoint Studio", icon: <StudioIcon />, open: true },
  { name: "Notepad", icon: <NotepadIcon />, open: true, stacked: true },
  { name: "Word", icon: <WordIcon />, open: true, stacked: true },
  { name: "Chrome profile", icon: <ChromeLogo><span className="block size-6 rounded-full bg-[radial-gradient(circle_at_65%_55%,#f3c6d8_10%,#5b2a8c_25%,#7f78c4_50%,#c9cf9a)]" /></ChromeLogo>, open: true },
];

function Taskbar() {
  return (
    <footer className="flex h-[60px] shrink-0 bg-[linear-gradient(90deg,#24343d,#29373c_50%,#22303a_70%,#2b2e2e_76%,#22303a_84%,#1d2a31)] font-['Open_Sans',sans-serif] text-white">
      <button aria-label="Start" className="flex w-[72px] items-center justify-center"><svg viewBox="0 0 24 24" className="size-6" fill="#fff"><path d="M0 3.500 10 2v9.500H0zM11.500 1.800 24 0v11.500H11.500zM0 13h10v9.500L0 21zM11.500 13H24v11l-12.500-1.800z" /></svg></button>
      <button aria-label="Search" className="flex w-[72px] items-center justify-center"><svg viewBox="0 0 24 24" className="size-6" fill="none" stroke="#fff" strokeWidth="1.500"><circle cx="15.500" cy="8.500" r="7.700" /><path d="M10 14 .5 23.500" /></svg></button>
      <button aria-label="Cortana" className="flex w-[72px] items-center justify-center"><i className="size-6 rounded-full border-[3px] border-white" /></button>
      <button aria-label="Task view" className="flex w-[72px] items-center justify-center"><svg viewBox="0 0 24 24" className="size-6" fill="none" stroke="#fff" strokeWidth="1.500"><path d="M1 0v3.500h15V0M1 24v-3.500h15V24M1 7h15v10H1zM22 0v5M22 12v12" /><path d="M20.500 7h3v3h-3z" fill="#fff" stroke="none" /></svg></button>
      <div className="ml-[3px] flex">
        {apps.map((a) => (
          <button key={a.name} aria-label={a.name} className={`relative flex w-[75px] items-center justify-center ${a.active ? "bg-[#56636a]" : ""}`}>
            {a.icon}
            {a.open && <i className={`absolute bottom-0 h-[3px] bg-[#76b9ed] ${a.active ? "inset-x-0" : "inset-x-[7px]"}`} />}
            {a.stacked && <i className="absolute bottom-0 right-[7px] h-[3px] w-[14px] bg-[#5b8db5]" />}
            {a.active && <i className="absolute inset-y-0 right-[6px] w-px bg-[#333f45]" />}
          </button>
        ))}
      </div>
      <div className="ml-auto flex items-center">
        <i className="size-7 rounded-full bg-[linear-gradient(120deg,#ffe26a_20%,#ff9a0a_85%)]" />
        <span className="ml-4 mt-1 whitespace-pre text-[20px]">28°C  Sunny</span>
        <svg viewBox="0 0 20 11" className="ml-[26px] h-[11px] w-5" fill="none" stroke="#fff" strokeWidth="1.500"><path d="m1 10 9-9 9 9" /></svg>
        <svg viewBox="0 0 18 26" className="ml-[18px] h-[26px] w-[18px]" fill="none" stroke="#fff" strokeWidth="1.400"><path d="M2 7h9v12H2zM11 12l5-3v8l-5-3M3 3q5-4 11 0M3 23q5 4 11 0" /></svg>
        <svg viewBox="0 0 24 16" className="ml-[14px] h-4 w-6" fill="none" stroke="#fff" strokeWidth="1.300"><path d="M1 1h20v14H1zM23 5v6" /><path d="M3 3h16v10H3z" fill="#fff" stroke="none" /></svg>
        <svg viewBox="0 0 20 20" className="ml-4 size-5" fill="none" stroke="#ccd" strokeWidth="1.500"><path d="M1 19Q1 2 19 1M6 19Q6 7 19 6M10.500 19q0-8 8.500-8.500" /><circle cx="17" cy="17.500" r="1.300" fill="#fff" /></svg>
        <svg viewBox="0 0 22 18" className="ml-3 h-[18px] w-[22px]" fill="none" stroke="#fff" strokeWidth="1.300"><path d="M1 6h3l6-5v16l-6-5H1zM13 6q2 3 0 6" /><path d="M16 4q4 5 0 10M19 2q5 7 0 14" stroke="#8a949a" /></svg>
        <span className="ml-4 text-[17px]">ENG</span>
        <div className="ml-4 flex w-[104px] flex-col items-center text-[18px] leading-[27px]"><span>17:25</span><span>04-02-2022</span></div>
        <button aria-label="Notifications" className="relative ml-[21px]">
          <svg viewBox="0 0 26 26" className="size-[26px]"><path d="M0 0h26v19H14l-5 6v-6H0z" fill="#fff" /><path d="M5 5.500h16M5 9.500h16M5 13.500h10" stroke="#222" strokeWidth="1.500" /></svg>
          <span className="absolute -bottom-[10px] -right-[12px] flex size-6 items-center justify-center rounded-full border border-[#999] bg-[#2c2f31] text-[14px] font-semibold">1</span>
        </button>
        <i className="ml-[31px] mr-[6px] h-[60px] w-px bg-[#6b757b]" />
      </div>
    </footer>
  );
}

export default function App() {
  return (
    <div className="flex h-screen flex-col overflow-hidden bg-white">
      <BrowserChrome />
      <div className="flex min-h-0 flex-1">
        <main className="flex min-w-0 flex-1 flex-col overflow-hidden">
          <Masthead />
          <Player />
          <Details />
        </main>
        <div className="w-6 shrink-0 bg-[#f8f8f8] px-[6px] pt-[6px]"><i className="block h-[153px] rounded-full bg-[#606060]" /></div>
      </div>
      <Taskbar />
    </div>
  );
}
